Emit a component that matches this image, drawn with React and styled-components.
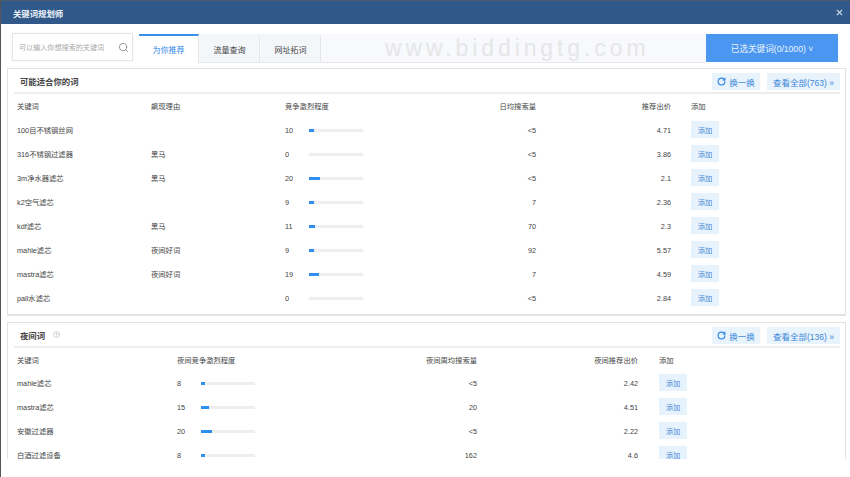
import styled, { createGlobalStyle } from "styled-components";
import { Search, X, RotateCw, CircleHelp } from "lucide-react";

const recommended = [
  { word: "100目不锈钢丝网", reason: "", level: 10, search: "<5", price: "4.71" },
  { word: "316不锈钢过滤器", reason: "黑马", level: 0, search: "<5", price: "3.86" },
  { word: "3m净水器滤芯", reason: "黑马", level: 20, search: "<5", price: "2.1" },
  { word: "k2空气滤芯", reason: "", level: 9, search: "7", price: "2.36" },
  { word: "kdf滤芯", reason: "黑马", level: 11, search: "70", price: "2.3" },
  { word: "mahle滤芯", reason: "夜间好词", level: 9, search: "92", price: "5.57" },
  { word: "mastra滤芯", reason: "夜间好词", level: 19, search: "7", price: "4.59" },
  { word: "pall水滤芯", reason: "", level: 0, search: "<5", price: "2.84" },
];

const night = [
  { word: "mahle滤芯", level: 8, search: "<5", price: "2.42" },
  { word: "mastra滤芯", level: 15, search: "20", price: "4.51" },
  { word: "安徽过滤器", level: 20, search: "<5", price: "2.22" },
  { word: "白酒过滤设备", level: 8, search: "162", price: "4.6" },
];

const RECOMMEND_COLS = "134px 134px 150px 101px 135px 1fr";
const NIGHT_COLS = "160px 200px 100px 161px 1fr";

function Level({ value }) {
  return (
    <LevelCell>
      <LevelNum>{value}</LevelNum>
      <Bar>
        <BarFill style={{ width: `${value}%` }} />
      </Bar>
    </LevelCell>
  );
}

function CardHeader({ title, total, help }) {
  return (
    <CardHead>
      <CardTitle>{title}</CardTitle>
      {help && (
        <HelpMark>
          <CircleHelp size={7} strokeWidth={1.5} />
        </HelpMark>
      )}
      <HeadActions>
        <LightButton>
          <RotateCw size={9} strokeWidth={3} color="#2f86e6" />
          换一换
        </LightButton>
        <LightButton $wide>查看全部({total}) »</LightButton>
      </HeadActions>
    </CardHead>
  );
}

export default function App() {
  return (
    <Page>
      <GlobalStyle />
      <TitleBar>
        <span>关键词规划师</span>
        <X size={9} strokeWidth={3} color="#c6d4e4" />
      </TitleBar>
      <ToolRow>
        <SearchBox>
          <span>可以输入你想搜索的关键词</span>
          <Search size={11} strokeWidth={1.6} color="#777" />
        </SearchBox>
        <Tabs>
          <Tab $active>为你推荐</Tab>
          <Tab>流量查询</Tab>
          <Tab>网址拓词</Tab>
          <TabRest>
            <Watermark>www.biddingtg.com</Watermark>
          </TabRest>
        </Tabs>
        <SelectedButton>已选关键词(0/1000) ˅</SelectedButton>
      </ToolRow>
      <Scroller>
        <Card>
          <CardHeader title="可能适合你的词" total={763} />
          <Row $cols={RECOMMEND_COLS} $height={24}>
            <div>关键词</div>
            <div>飙现理由</div>
            <div>竞争激烈程度</div>
            <Num>日均搜索量</Num>
            <Num>推荐出价</Num>
            <AddCell $pad={20}>添加</AddCell>
          </Row>
          {recommended.map((r) => (
            <Row $cols={RECOMMEND_COLS} key={r.word}>
              <div>{r.word}</div>
              <div>{r.reason}</div>
              <Level value={r.level} />
              <Num>{r.search}</Num>
              <Num>{r.price}</Num>
              <AddCell $pad={20}>
                <AddButton>添加</AddButton>
              </AddCell>
            </Row>
          ))}
        </Card>
        <Card $open>
          <CardHeader title="夜间词" total={136} help />
          <Row $cols={NIGHT_COLS} $height={23}>
            <div>关键词</div>
            <div>夜间竞争激烈程度</div>
            <Num>夜间周均搜索量</Num>
            <Num>夜间推荐出价</Num>
            <AddCell $pad={21}>添加</AddCell>
          </Row>
          {night.map((r) => (
            <Row $cols={NIGHT_COLS} key={r.word}>
              <div>{r.word}</div>
              <Level value={r.level} />
              <Num>{r.search}</Num>
              <Num>{r.price}</Num>
              <AddCell $pad={21}>
                <AddButton>添加</AddButton>
              </AddCell>
            </Row>
          ))}
        </Card>
      </Scroller>
    </Page>
  );
}

const GlobalStyle = createGlobalStyle`
  html, body {
    margin: 0;
    padding: 0;
    background: #fff;
    overflow: hidden;
  }
  body {
    font-family: "Liberation Sans", "Noto Sans CJK SC", sans-serif;
    color: #444;
  }
`;

const Page = styled.div`
  width: 850px;
  height: 477px;
  box-sizing: border-box;
  border-left: 1px solid #555;
  background: #fff;
  overflow: hidden;
`;

const TitleBar = styled.div`
  height: 24px;
  box-sizing: border-box;
  border-top: 1px solid #4a5a6c;
  padding: 0 6px 0 12px;
  background: #30598a;
  color: #eef3f8;
  font-size: 8.4px;
  font-weight: bold;
  display: flex;
  align-items: center;
  justify-content: space-between;
`;

const ToolRow = styled.div`
  height: 44px;
  box-sizing: border-box;
  padding: 9px 12px 0 11px;
  display: flex;
`;

const SearchBox = styled.div`
  width: 121px;
  height: 28px;
  box-sizing: border-box;
  margin-right: 6px;
  padding: 0 3px 0 6px;
  border: 1px solid #e6e6e6;
  box-shadow: 0 0 2px #eee;
  display: flex;
  align-items: center;
  justify-content: space-between;
  font-size: 7.1px;
  color: #aaa;
  white-space: nowrap;
`;

const Tabs = styled.div`
  flex: 1;
  height: 28px;
  margin-top: 1px;
  display: flex;
  background: #f7f9fc;
  border-bottom: 1px solid #e8e8e8;
  position: relative;
`;

const Tab = styled.div`
  width: 60px;
  box-sizing: border-box;
  margin-right: 1px;
  height: ${(p) => (p.$active ? "29px" : "28px")};
  display: flex;
  align-items: center;
  justify-content: center;
  font-size: 8px;
  color: ${(p) => (p.$active ? "#2f86e6" : "#444")};
  background: ${(p) => (p.$active ? "#fff" : "#f4f7fa")};
  border-top: 2px solid ${(p) => (p.$active ? "#3a8ee6" : "transparent")};
  border-right: 1px solid #e4e6e8;
`;

const TabRest = styled.div`
  flex: 1;
  position: relative;
`;

const Watermark = styled.span`
  position: absolute;
  left: 63px;
  top: 1px;
  font-family: "Liberation Sans", sans-serif;
  font-size: 23px;
  letter-spacing: 3.9px;
  color: #e6e6e6;
  white-space: nowrap;
`;

const SelectedButton = styled.div`
  width: 132px;
  height: 28px;
  margin-top: 1px;
  background: #4a96f0;
  color: #eaf3fe;
  font-size: 8.6px;
  display: flex;
  align-items: center;
  justify-content: center;
`;

const Scroller = styled.div`
  height: 391px;
  overflow: hidden;
  padding: 0 4px 0 6px;
`;

const Card = styled.div`
  box-sizing: border-box;
  border: 1px solid #e2e2e2;
  border-bottom: ${(p) => (p.$open ? "none" : "2px solid #e2e2e2")};
  height: ${(p) => (p.$open ? "auto" : "248px")};
  margin-bottom: 6px;
  padding: 0 5px 0 6px;
`;

const CardHead = styled.div`
  height: 25px;
  box-sizing: border-box;
  border-bottom: 2px solid #eeeeee;
  padding-left: 6px;
  display: flex;
  align-items: center;
`;

const CardTitle = styled.div`
  font-size: 8.4px;
  font-weight: bold;
  color: #444;
`;

const HelpMark = styled.span`
  margin-left: 8px;
  display: flex;
  color: #999;
`;

const HeadActions = styled.div`
  margin-left: auto;
  align-self: flex-end;
  margin-bottom: 2px;
  display: flex;
  gap: 7px;
`;

const LightButton = styled.div`
  width: ${(p) => (p.$wide ? "73px" : "48px")};
  height: 17px;
  background: #e8f3fc;
  color: #3b86d8;
  font-size: 8.5px;
  display: flex;
  align-items: center;
  justify-content: center;
  gap: 3px;
  white-space: nowrap;
`;

const Row = styled.div`
  display: grid;
  grid-template-columns: ${(p) => p.$cols};
  align-items: center;
  height: ${(p) => p.$height || 24}px;
  padding-left: 3px;
  font-size: 7.3px;
  color: #444;
  white-space: nowrap;
`;

const Num = styled.div`
  text-align: right;
`;

const LevelCell = styled.div`
  display: flex;
  align-items: center;
`;

const LevelNum = styled.span`
  width: 24px;
`;

const Bar = styled.div`
  width: 54px;
  height: 3px;
  background: #eeeeee;
`;

const BarFill = styled.div`
  height: 100%;
  background: #2f8ff0;
`;

const AddCell = styled.div`
  padding-left: ${(p) => p.$pad}px;
`;

const AddButton = styled.div`
  width: 28px;
  height: 17px;
  margin-bottom: 1px;
  background: #e6f3fd;
  color: #4a8ad8;
  display: flex;
  align-items: center;
  justify-content: center;
`;
